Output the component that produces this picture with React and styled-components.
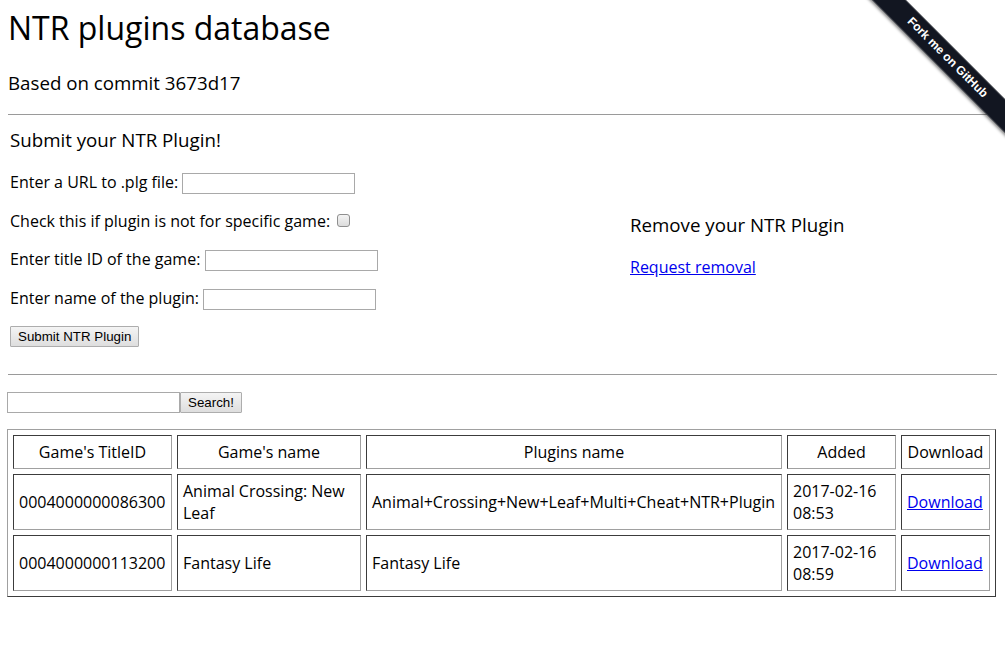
import React from 'react';
import styled, { createGlobalStyle } from 'styled-components';

const GlobalStyle = createGlobalStyle`
	html, body {
		margin: 0;
		padding: 0;
		background: #ffffff;
	}
	body {
		font-family: 'Open Sans', 'Noto Sans', sans-serif;
		color: #000000;
		overflow-x: hidden;
	}
`;

const plugins = [
	{
		id: '0004000000086300',
		game: 'Animal Crossing: New Leaf',
		name: 'Animal+Crossing+New+Leaf+Multi+Cheat+NTR+Plugin',
		added: '2017-02-16 08:53',
	},
	{
		id: '0004000000113200',
		game: 'Fantasy Life',
		name: 'Fantasy Life',
		added: '2017-02-16 08:59',
	},
];

const App = () => {
	return (
		<React.Fragment>
			<GlobalStyle />
			<Page>
				<Title>NTR plugins database</Title>
				<SubTitle>Based on commit 3673d17</SubTitle>
				<Rule />
				<FormSection>
					<SubmitColumn>
						<SectionTitle>Submit your NTR Plugin!</SectionTitle>
						<Field>
							Enter a URL to .plg file: <TextInput type="text" width="173px" />
						</Field>
						<Field>
							Check this if plugin is not for specific game: <CheckBox type="checkbox" />
						</Field>
						<Field>
							Enter title ID of the game: <TextInput type="text" width="173px" />
						</Field>
						<Field>
							Enter name of the plugin: <TextInput type="text" width="173px" />
						</Field>
						<ButtonRow>
							<Button type="button">Submit NTR Plugin</Button>
						</ButtonRow>
					</SubmitColumn>
					<RemoveColumn>
						<SectionTitle>Remove your NTR Plugin</SectionTitle>
						<Field>
							<Link href="#">Request removal</Link>
						</Field>
					</RemoveColumn>
				</FormSection>
				<Rule />
				<SearchBar>
					<TextInput type="text" width="173px" />
					<Button type="button">Search!</Button>
				</SearchBar>
				<Table>
					<thead>
						<tr>
							<Th width="147px">Game's TitleID</Th>
							<Th width="172px">Game's name</Th>
							<Th width="404px">Plugins name</Th>
							<Th width="97px">Added</Th>
							<Th width="77px">Download</Th>
						</tr>
					</thead>
					<tbody>
						{plugins.map(p => (
							<tr key={p.id}>
								<Td>{p.id}</Td>
								<Td>{p.game}</Td>
								<Td>{p.name}</Td>
								<Td>{p.added}</Td>
								<Td>
									<Link href="#">Download</Link>
								</Td>
							</tr>
						))}
					</tbody>
				</Table>
			</Page>
			<RibbonCorner>
				<Ribbon href="#">Fork me on GitHub</Ribbon>
			</RibbonCorner>
		</React.Fragment>
	);
};
export default App;

const Page = styled.div`
	padding: 6px 8px 8px 8px;
`;

const Title = styled.h1`
	font-size: 32px;
	font-weight: 400;
	line-height: normal;
	margin: 0 0 21px 0;
`;

const SubTitle = styled.h3`
	font-size: 18.72px;
	font-weight: 400;
	line-height: normal;
	margin: 0;
`;

const Rule = styled.hr`
	border: none;
	border-top: 1px solid #9a9a9a;
	height: 0;
	margin: 19px 0 0 0;
`;

const FormSection = styled.div`
	display: grid;
	grid-template-columns: 620px 1fr;
	padding-left: 2px;
	padding-top: 12px;
	padding-bottom: 8px;
`;

const SubmitColumn = styled.div`
	display: flex;
	flex-direction: column;
`;

const RemoveColumn = styled.div`
	display: flex;
	flex-direction: column;
	padding-top: 85px;
`;

const SectionTitle = styled.h3`
	font-size: 18.72px;
	font-weight: 400;
	line-height: normal;
	margin: 0 0 18.72px 0;
`;

const Field = styled.p`
	font-size: 16px;
	line-height: 22px;
	margin: 0 0 16px 0;
	&:last-child {
		margin-bottom: 0;
	}
`;

const ButtonRow = styled.div`
	font-size: 16px;
	line-height: 22px;
	margin-top: -3px;
`;

const TextInput = styled.input`
	box-sizing: border-box;
	width: ${props => props.width};
	height: 21px;
	border: 1px solid #a9a9a9;
	padding: 1px 2px;
	margin: 0;
	font-family: 'Liberation Sans', Arial, sans-serif;
	font-size: 13.33px;
	vertical-align: middle;
	background: #ffffff;
`;

const CheckBox = styled.input`
	appearance: none;
	box-sizing: border-box;
	width: 13px;
	height: 13px;
	margin: 0 0 0 3px;
	border: 1px solid #8f8f8f;
	border-radius: 3px;
	background: linear-gradient(#f4f4f4, #dcdcdc);
	vertical-align: middle;
	position: relative;
	top: -2px;
`;

const Button = styled.button`
	box-sizing: border-box;
	height: 21px;
	padding: 0 7px;
	margin: 0;
	border: 1px solid #adadad;
	border-radius: 1px;
	background: linear-gradient(#f4f4f4, #dedede);
	font-family: 'Liberation Sans', Arial, sans-serif;
	font-size: 13.33px;
	color: #000000;
	vertical-align: middle;
`;

const Link = styled.a`
	color: #0000ee;
	text-decoration: underline;
`;

const SearchBar = styled.div`
	display: flex;
	margin: 17px 0 16px 0;
	& > input {
		margin-left: -1px;
	}
`;

const Table = styled.table`
	width: 100%;
	border-collapse: separate;
	border-spacing: 5px;
	border: 1px solid;
	border-color: #a0a0a0 #3c3c3c #3c3c3c #a0a0a0;
	font-size: 16px;
	line-height: 22px;
	margin-left: -1px;
`;

const Th = styled.th`
	width: ${props => props.width};
	font-weight: 400;
	text-align: center;
	padding: 5px;
	border: 1px solid;
	border-color: #3c3c3c #a0a0a0 #a0a0a0 #3c3c3c;
	white-space: nowrap;
`;

const Td = styled.td`
	text-align: left;
	padding: 5px;
	border: 1px solid;
	border-color: #3c3c3c #a0a0a0 #a0a0a0 #3c3c3c;
`;

const RibbonCorner = styled.div`
	position: absolute;
	top: 0;
	right: 0;
	width: 150px;
	height: 150px;
	overflow: hidden;
`;

const Ribbon = styled.a`
	position: absolute;
	left: -13px;
	top: 46px;
	width: 210px;
	height: 24px;
	box-sizing: border-box;
	transform: rotate(45deg);
	background: #121621;
	color: #ffffff;
	text-decoration: none;
	text-align: center;
	font-family: 'Liberation Sans', Arial, sans-serif;
	font-weight: 700;
	font-size: 12px;
	box-shadow: 0 2px 3px rgba(0, 0, 0, 0.45);
	border-top: 1px solid rgba(255, 255, 255, 0.15);
	border-bottom: 1px solid rgba(255, 255, 255, 0.15);
	line-height: 20px;
`;
